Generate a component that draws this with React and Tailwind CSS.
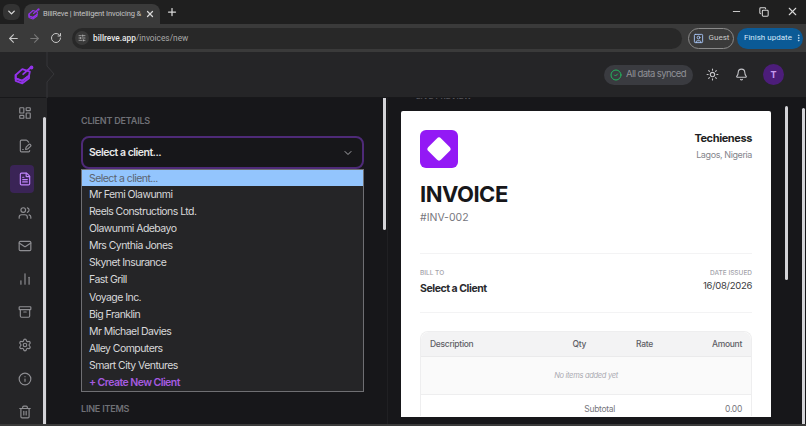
import { ArrowLeft, ArrowRight, RotateCw, SlidersHorizontal, ChevronDown, X, Plus, Minus, Copy, UserSquare, EllipsisVertical, Sun, Bell, CircleCheck, LayoutDashboard, FilePenLine, FileText, Users, Mail, ChartNoAxesColumn, Archive, Settings, Info, Trash2 } from 'lucide-react';

const clients = [
  'Mr Femi Olawunmi',
  'Reels Constructions Ltd.',
  'Olawunmi Adebayo',
  'Mrs Cynthia Jones',
  'Skynet Insurance',
  'Fast Grill',
  'Voyage Inc.',
  'Big Franklin',
  'Mr Michael Davies',
  'Alley Computers',
  'Smart City Ventures',
];

function Logo({ size = 20 }) {
  return (
    <svg width={size} height={size} viewBox="0 0 24 24" fill="none" stroke="#9333ea" strokeWidth="2.2" strokeLinejoin="round" strokeLinecap="round">
      <path d="M2 12l8-7 9 3-1 5-8 6-8-3z" />
      <path d="M2 12v4l8 3 8-6" />
      <path d="M2 16v3l8 3 8-6v-3" />
      <path d="M11 11l9-8" />
      <circle cx="21" cy="3" r="1.2" fill="#9333ea" />
    </svg>
  );
}

function BrowserBar() {
  return (
    <div className="font-['Roboto',sans-serif]">
      <div className="h-6 bg-[#1f1f1f] flex items-end text-[#d8d8d8]">
        <div className="w-[17px] h-[16px] mb-[4px] ml-[3px] rounded-md bg-[#333] flex items-center justify-center">
          <ChevronDown size={11} strokeWidth={3} />
        </div>
        <div className="ml-[4px] w-[136px] h-[20px] bg-[#3a3a3a] rounded-t-lg flex items-center pl-[4px] pr-[5px]">
          <Logo size={12} />
          <span className="ml-[3px] text-[7.5px] tracking-[-0.15px] flex-1 whitespace-nowrap text-[#c4c4c4]">BillReve | Intelligent Invoicing &amp;</span>
          <X size={10} strokeWidth={3} className="shrink-0" />
        </div>
        <Plus size={12} strokeWidth={2.5} className="ml-[6px] mb-[6px]" />
        <div className="ml-auto flex items-center gap-[17px] pr-[7px] mb-[6px]">
          <Minus size={11} />
          <Copy size={10} strokeWidth={2.5} />
          <X size={13} />
        </div>
      </div>
      <div className="h-[28px] bg-[#3a3a3a] flex items-center text-[#c8c8c8]">
        <ArrowLeft size={13} className="ml-[7px]" />
        <ArrowRight size={13} className="ml-[8px] text-[#777]" />
        <RotateCw size={12} className="ml-[9px]" />
        <div className="ml-[10px] w-[610px] h-[21px] rounded-full bg-[#282828] flex items-center pl-[3px]">
          <div className="w-[14px] h-[14px] rounded-full bg-[#3a3a3a] flex items-center justify-center">
            <SlidersHorizontal size={8} />
          </div>
          <span className="ml-[4px] text-[8.3px] text-[#e8e8e8] font-medium">billreve.app<span className="text-[#a8a8a8] font-normal">/invoices/new</span></span>
        </div>
        <div className="ml-[6px] w-[46px] h-[21px] rounded-full border border-[#8a8a8a] flex items-center justify-center gap-[5px] text-[8px]">
          <UserSquare size={11} className="text-[#a8c7fa]" />
          <span>Guest</span>
        </div>
        <div className="ml-[3px] w-[66px] h-[21px] rounded-full bg-[#0b5a96] flex items-center pl-[7px] text-[8px] text-[#d6e8f8] whitespace-nowrap">
          <span>Finish update</span>
          <EllipsisVertical size={10} className="ml-[2px]" />
        </div>
      </div>
    </div>
  );
}

function TopBar() {
  return (
    <div className="relative h-[46px] bg-[#252527] border-b border-[#18181a] flex items-center shrink-0">
      <div className="w-[47px] h-full flex items-center justify-center">
        <Logo size={20} />
      </div>
      {/* notch on the sidebar toggle */}
      <svg className="absolute left-[46px] top-0" width="10" height="46" viewBox="0 0 10 46" fill="none" stroke="#37373a">
        <path d="M1 0v14l7 8-7 8v16" />
      </svg>
      <div className="ml-auto flex items-center mr-[22px]">
        <div className="h-5 w-[89px] pl-[6px] rounded-full bg-[#3a3b40] flex items-center gap-[4px] text-[9.5px] tracking-[-0.6px] text-[#8f9096] whitespace-nowrap">
          <CircleCheck size={12} className="text-[#22b85e] shrink-0" />
          <span>All data synced</span>
        </div>
        <Sun size={13} className="ml-[13px] text-[#c4c4c8]" />
        <Bell size={13} className="ml-[16px] text-[#c4c4c8]" />
        <div className="ml-[15px] w-[21px] h-[21px] rounded-full bg-[#4c1d7a] flex items-center justify-center text-[9px] font-bold text-[#c79bf0]">T</div>
      </div>
    </div>
  );
}

function Sidebar() {
  const items = [LayoutDashboard, FilePenLine, FileText, Users, Mail, ChartNoAxesColumn, Archive, Settings, Info, Trash2];
  return (
    <div className="w-[47px] bg-[#252527] flex shrink-0 overflow-hidden">
      <div className="w-[43px] flex flex-col items-center pt-px">
        {items.map((Icon, i) => (
          <div key={i} className={`w-[24px] h-[28px] shrink-0 mb-[5.2px] pl-[6px] rounded flex items-center justify-center ${i === 2 ? 'bg-[#3a2456] text-[#c084fc]' : 'text-[#8e8e92]'}`}>
            <Icon size={14} className="shrink-0" />
          </div>
        ))}
      </div>
      <div className="w-[3px] mt-[19px] h-[320px] bg-[#d4d4d8] rounded-full" />
    </div>
  );
}

function ClientPanel() {
  return (
    <div className="w-[340px] bg-[#17171a] flex shrink-0 overflow-hidden">
      <div className="w-[336px] pl-[34px] pr-[19px] pt-[17px]">
        <div className="text-[9px] leading-[12px] font-semibold tracking-[-0.2px] text-[#6f7076]">CLIENT DETAILS</div>
        <div className="mt-[9px] h-[33px] rounded-lg border-2 border-[#4e2a78] bg-[#17171a] flex items-center pl-[6px] pr-2 text-[10.5px] tracking-[-0.5px] font-semibold text-[#e8e8e8]">
          <span>Select a client...</span>
          <ChevronDown size={12} className="ml-auto text-[#a8a8ac]" />
        </div>
        <div className="w-[283px] border border-[#6f6f73] bg-[#252527] text-[10.5px] tracking-[-0.55px] leading-[17.1px] text-[#d8d8da]">
          <div className="bg-[#93c5fd] text-[#5b6470] pl-[7px] h-[16px]">Select a client...</div>
          {clients.map((c) => (
            <div key={c} className="pl-[7px]">{c}</div>
          ))}
          <div className="pl-[7px] font-semibold text-[#a65be0]">+ Create New Client</div>
        </div>
        <div className="mt-[11px] text-[9px] leading-[12px] font-semibold tracking-[-0.2px] text-[#6f7076]">LINE ITEMS</div>
      </div>
      <div className="w-[3px] h-[132px] bg-[#d4d4d8] rounded-b-full" />
    </div>
  );
}

function InvoicePreview() {
  return (
    <div className="flex-1 bg-[#17171a] border-l border-[#202023] flex overflow-hidden min-w-0">
      <div className="w-[370px] ml-[13px] shrink-0">
        <div className="h-[13px] overflow-hidden">
          <div className="-mt-[7px] ml-[15px] text-[8px] leading-[10px] font-semibold text-[#55555a]">LIVE PREVIEW</div>
        </div>
        <div className="h-[306px] bg-white rounded-t-[2px] px-[19px] pt-[19px] overflow-hidden">
          <div className="flex justify-between">
            <div className="w-[38px] h-[38px] rounded-md bg-[#9319f5] flex items-center justify-center">
              <div className="w-[18px] h-[18px] bg-white rounded-[3px] rotate-45" />
            </div>
            <div className="text-right">
              <div className="text-[11px] tracking-[-0.4px] font-bold text-[#1f1f23] leading-[16px]">Techieness</div>
              <div className="mt-[2px] text-[9px] tracking-[-0.4px] text-[#85858c] leading-[14px]">Lagos, Nigeria</div>
            </div>
          </div>
          <div className="mt-[11px] text-[22px] tracking-[-0.5px] leading-[30px] font-bold text-[#17171a]">INVOICE</div>
          <div className="mt-[2px] text-[10.5px] text-[#77777e] leading-[14px]">#INV-002</div>
          <div className="mt-[28px] border-t border-[#f3f3f4] pt-[15px] flex justify-between pb-[16px] border-b">
            <div>
              <div className="text-[6.5px] font-medium text-[#a3a3aa] leading-[9px]">BILL TO</div>
              <div className="mt-[4px] text-[10.5px] tracking-[-0.45px] font-bold text-[#2a2a2e] leading-[14px]">Select a Client</div>
            </div>
            <div className="text-right">
              <div className="text-[6.5px] font-medium text-[#a3a3aa] leading-[9px]">DATE ISSUED</div>
              <div className="mt-px text-[9.5px] tracking-[-0.3px] text-[#3a3a40] leading-[14px]">16/08/2026</div>
            </div>
          </div>
          <div className="mt-[18px] rounded-t-lg border border-[#eeeeef] border-b-0 text-[8.5px] tracking-[-0.3px]">
            <div className="h-[25px] bg-[#f3f3f4] rounded-t-lg border-b border-[#eaeaeb] grid grid-cols-[106px_50px_67px_1fr] items-center px-[9px] font-medium text-[#5f5f66]">
              <span>Description</span>
              <span className="text-right">Qty</span>
              <span className="text-right">Rate</span>
              <span className="text-right">Amount</span>
            </div>
            <div className="h-[38px] bg-[#fafafa] border-b border-[#eeeeef] flex items-center justify-center italic text-[7.5px] text-[#a9a9b0]">No items added yet</div>
            <div className="flex justify-end pr-[9px] pt-[8px] text-[#77777e]">
              <span>Subtotal</span>
              <span className="w-[127px] text-right">0.00</span>
            </div>
          </div>
        </div>
      </div>
      <div className="w-[3px] ml-[14px] mt-[8px] h-[174px] bg-[#d4d4d8] rounded-full shrink-0" />
      <div className="w-[3px] ml-[14px] mt-[10px] bg-[#d4d4d8] rounded-t-full shrink-0" />
    </div>
  );
}

export default function App() {
  return (
    <div className="w-[806px] h-[426px] overflow-hidden flex flex-col bg-[#3a3a3a] font-['Inter',sans-serif]">
      <BrowserBar />
      <TopBar />
      <div className="flex h-[326px]">
        <Sidebar />
        <ClientPanel />
        <InvoicePreview />
      </div>
    </div>
  );
}
